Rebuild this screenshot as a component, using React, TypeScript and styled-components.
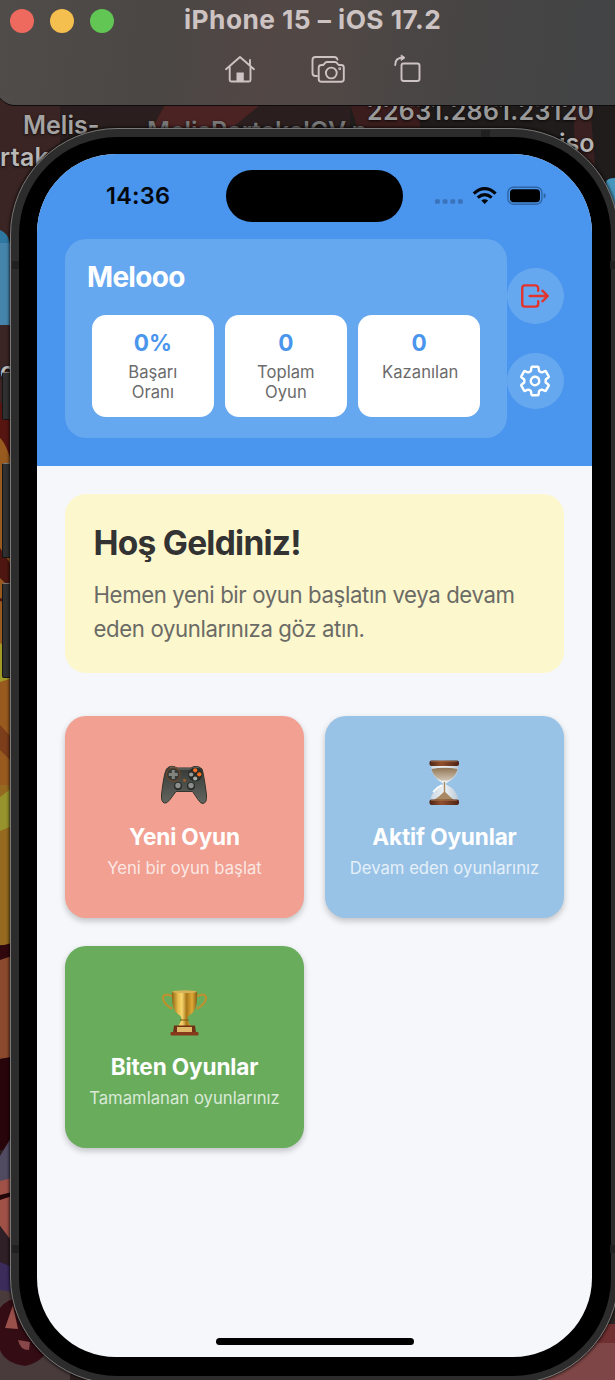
import React from 'react';
import styled, { createGlobalStyle } from 'styled-components';
import { IoLogOutOutline, IoSettingsOutline } from 'react-icons/io5';

const GlobalStyle = createGlobalStyle`
  *, *::before, *::after { box-sizing: border-box; }
  html, body { margin: 0; padding: 0; background: #2a1f1e; }
  body { overflow: hidden; font-family: Inter, "Liberation Sans", sans-serif; }
`;

/* ---------- desktop ---------- */

const Desktop = styled.div`
  position: relative;
  width: 615px;
  height: 1380px;
  overflow: hidden;
`;

const Wallpaper = styled.svg`
  position: absolute;
  inset: 0;
`;

const FileLabel = styled.span<{ $x: number; $y: number; $tone?: string; $track?: number }>`
  position: absolute;
  left: ${p => p.$x}px;
  top: ${p => p.$y}px;
  font-size: 25px;
  line-height: 30px;
  font-weight: 600;
  letter-spacing: ${p => p.$track ?? 0}px;
  white-space: nowrap;
  color: ${p => p.$tone ?? '#a5a3a2'};
  text-shadow: 0 1px 3px rgba(0, 0, 0, 0.8);
`;

/* ---------- simulator window bar ---------- */

const TitleBar = styled.header`
  position: absolute;
  top: 0;
  left: -3px;
  width: 640px;
  height: 106px;
  padding: 8px 0 0 13px;
  border-bottom: 1px solid #0e0c0c;
  border-bottom-left-radius: 18px;
  background: linear-gradient(97deg, #4f4c4a 0%, #4a4745 25%, #524745 42%, #504845 52%, #484544 68%, #434445 92%);
`;

const TitleRow = styled.div`
  display: flex;
  align-items: center;
  height: 26px;
`;

const Light = styled.i<{ $color: string }>`
  width: 24px;
  height: 24px;
  margin-right: 16px;
  border-radius: 50%;
  background: ${p => p.$color};
`;

const WindowTitle = styled.h1`
  margin: -3px 0 0 54px;
  font-size: 26.3px;
  line-height: 30px;
  font-weight: 700;
  letter-spacing: 0.45px;
  white-space: nowrap;
  color: #cdc3c2;
`;

const Tools = styled.div`
  display: flex;
  gap: 52px;
  margin: 17px 0 0 212px;
`;

const ToolIcon = styled.svg`
  display: block;
  width: 36px;
  height: 36px;
  fill: none;
  stroke: #cdc3c2;
  stroke-width: 1.9;
  stroke-linecap: round;
  stroke-linejoin: round;

  &:last-child {
    margin-left: -8px;
  }
`;

/* ---------- phone ---------- */

const Phone = styled.div`
  position: absolute;
  left: 10px;
  top: 128px;
  width: 609px;
  height: 1256px;
  padding: 7.5px;
  border: 1px solid #7b7a79;
  border-radius: 107px;
  background: #2c2c2c;
  box-shadow: 0 0 3px 1px rgba(0, 0, 0, 0.7);
`;

const SideButton = styled.i<{ $top: number; $height: number }>`
  position: absolute;
  left: 2px;
  top: ${p => p.$top}px;
  width: 10px;
  height: ${p => p.$height}px;
  border: 1px solid #151515;
  border-top-color: #777;
  border-radius: 2px 0 0 2px;
  background: #303030;
`;

const Antenna = styled.i<{ $x: number; $y: number; $w: number; $h: number }>`
  position: absolute;
  left: ${p => p.$x}px;
  top: ${p => p.$y}px;
  width: ${p => p.$w}px;
  height: ${p => p.$h}px;
  background: #202020;
`;

const Bezel = styled.div`
  height: 100%;
  padding: 17.5px 18.5px;
  border-radius: 98px;
  background: #000;
`;

const Screen = styled.div`
  display: flex;
  flex-direction: column;
  width: 555px;
  height: 1203px;
  overflow: hidden;
  border-radius: 79px;
  background: #f5f7fb;
`;

const TopArea = styled.section`
  height: 312px;
  padding: 0 28px;
  background: #4a95ed;
`;

const StatusBar = styled.div`
  display: flex;
  align-items: center;
  height: 85px;
  padding: 0 0 1px 41px;
`;

const Clock = styled.time`
  width: 120px;
  margin-top: -2px;
  font-size: 23.5px;
  font-weight: 600;
  letter-spacing: 0.25px;
  color: #04080d;
`;

const Island = styled.div`
  width: 177px;
  height: 52px;
  border-radius: 26px;
  background: #000;
`;

const StatusIcons = styled.svg`
  margin-left: 31px;
  width: 114px;
  height: 26px;
  flex: none;
`;

const HeaderRow = styled.div`
  display: flex;
  align-items: center;
`;

const ProfilePanel = styled.div`
  width: 442px;
  height: 199px;
  padding: 21px 21.5px;
  border-radius: 21px;
  background: #66a8ef;
`;

const UserName = styled.h2`
  margin: 0 0 21px 0.5px;
  font-size: 28px;
  line-height: 35px;
  height: 34px;
  font-weight: 700;
  letter-spacing: -0.7px;
  color: #fff;
`;

const Stats = styled.div`
  display: flex;
  gap: 11.3px;
  padding: 0 5.5px;
`;

const Stat = styled.div`
  width: 122px;
  height: 102px;
  padding: 14px 14px 0;
  border-radius: 14px;
  background: #fff;
  text-align: center;
`;

const StatValue = styled.div`
  font-size: 22.6px;
  line-height: 28px;
  font-weight: 700;
  color: #4a95ed;
`;

const StatLabel = styled.div`
  margin: 5px -10px 0;
  padding: 0 20px;
  font-size: 16.6px;
  line-height: 20.4px;
  letter-spacing: 0.05px;
  color: #6b6b6b;
`;

const Actions = styled.div`
  display: flex;
  flex-direction: column;
  gap: 28.5px;
`;

const RoundButton = styled.button<{ $color: string }>`
  display: grid;
  place-items: center;
  width: 56.5px;
  height: 56.5px;
  padding: 0;
  border: 0;
  border-radius: 50%;
  background: #66a8ef;
  color: ${p => p.$color};
  font-size: 34px;

  svg * {
    stroke-width: 36px;
  }
`;

const Content = styled.main`
  flex: 1;
  padding: 28px;
`;

const Welcome = styled.section`
  height: 179px;
  padding: 28px;
  border-radius: 21px;
  background: #fdf7cd;
`;

const WelcomeTitle = styled.h2`
  margin: 0 0 14px 0.5px;
  font-size: 33.5px;
  line-height: 42px;
  font-weight: 700;
  letter-spacing: -0.75px;
  color: #333;
`;

const WelcomeText = styled.p`
  margin: 0 0 0 0.5px;
  font-size: 22.2px;
  line-height: 34px;
  letter-spacing: -0.38px;
  white-space: nowrap;
  color: #6b6b66;
`;

const Cards = styled.div`
  display: grid;
  grid-template-columns: 239px 239px;
  justify-content: space-between;
  row-gap: 28.5px;
  margin-top: 42.5px;
`;

const Card = styled.button<{ $color: string }>`
  display: flex;
  flex-direction: column;
  align-items: center;
  height: 202px;
  padding: 41px 0 0;
  border: 0;
  border-radius: 21px;
  background: ${p => p.$color};
  box-shadow: 0 3px 6px rgba(0, 0, 0, 0.22);
  font-family: inherit;
  color: #fff;
`;

const Picture = styled.svg`
  width: 54px;
  height: 54px;
  margin-left: -2px;
`;

const CardTitle = styled.strong`
  margin-top: 12px;
  font-size: 22.6px;
  line-height: 28px;
  font-weight: 700;
  letter-spacing: -0.15px;
  white-space: nowrap;
`;

const CardNote = styled.span`
  margin-top: 7px;
  font-size: 16.7px;
  line-height: 20px;
  white-space: nowrap;
  opacity: 0.75;
`;

const HomeIndicator = styled.div`
  width: 198px;
  height: 7px;
  margin: 0 auto 12px;
  border-radius: 4px;
  background: #000;
`;

/* ---------- drawings ---------- */

const Scene = () => (
  <Wallpaper width="615" height="1380" viewBox="0 0 615 1380">
    <rect width="615" height="1380" fill="#2a1f1e" />
    <rect width="60" height="400" y="100" fill="#3a2524" />
    <rect x="350" width="265" height="400" fill="#211c1c" />
    <path d="M165 105H260L205 150H140Z" fill="#4b2322" />
    <path d="M350 105H420V150H365Z" fill="#3b1d1d" />
    <path d="M573 105H590L598 200H578Z" fill="#3a2020" />
    <path d="M0 230Q8 233 10 243V317H0Z" fill="#2e77a0" />
    <rect y="243" width="14" height="82" fill="#4585ac" />
    <path d="M606 182Q607 178 615 178V210H610Z" fill="#4796bd" />
    <rect y="425" width="14" height="365" fill="#985a1e" />
    <path d="M0 402L12 412V464Q6 443 0 438Z" fill="#571512" />
    <path d="M0 548L12 566V590L0 578Z" fill="#4d1611" />
    <path d="M0 598L12 602V605L0 601Z" fill="#4d1611" />
    <path d="M0 643L12 652V678L0 682Z" fill="#a29a27" />
    <path d="M0 725L12 738V762L0 750Z" fill="#7b3d1a" />
    <rect y="785" width="14" height="160" fill="#95691f" />
    <path d="M0 797L12 788V826L0 831Z" fill="#97942d" />
    <path d="M0 946L12 943V956L0 960Z" fill="#30070c" />
    <path d="M0 960L12 956V1057L0 1059Z" fill="#8c4a2c" />
    <path d="M0 1059L12 1057V1150H0Z" fill="#28040b" />
    <path d="M0 1156L12 1136V1190H0Z" fill="#504b61" />
    <path d="M0 1181L12 1178V1242L0 1226Z" fill="#9f5148" />
    <path d="M0 1195L12 1192V1196L0 1200Z" fill="#22070b" />
    <path d="M0 1226L12 1242V1270L0 1262Z" fill="#2e2026" />
    <path d="M0 1262L12 1267V1300H0Z" fill="#3b2c5c" />
    <path d="M0 1290L70 1300V1380H0Z" fill="#493a3b" />
    <path d="M0 1308Q8 1298 20 1298L50 1345Q44 1362 25 1366Q5 1363 0 1350Z" fill="#340c13" />
    <path d="M5 1328L13 1305L18 1329Z" fill="#9a504b" />
    <path d="M18 1340L30 1342L29 1350Q20 1350 18 1340Z" fill="#88484a" />
    <rect x="540" y="1290" width="75" height="90" fill="#7e4646" />
    <rect x="596" y="1290" width="19" height="34" fill="#2a2523" />
    <rect x="596" y="1324" width="19" height="19" fill="#702f30" />
  </Wallpaper>
);

const HouseIcon = () => (
  <ToolIcon viewBox="0 0 36 36">
    <path d="M4 18.2 18 6l14 12.2M7.700 16v13Q7.700 30.500 9.200 30.500H27Q28.500 30.500 28.500 29V16M28 14V9" />
    <path d="M14.500 31V21.500H21.800V31Z" fill="#cdc3c2" stroke="none" />
  </ToolIcon>
);

const CameraIcon = () => (
  <ToolIcon viewBox="0 0 36 36">
    <path d="M7 25H5.500Q2.500 25 2.500 22V9Q2.500 6 5.500 6H24.500Q26.500 6 27.500 8.500" />
    <path d="M12 14H13.200L15.200 11.800Q16 11 17 11H25Q26 11 26.800 11.800L28.600 14H31Q33.800 14 33.800 16.500V28Q33.800 30.800 31 30.800H11.500Q8.700 30.800 8.700 28V16.500Q8.700 14 12 14Z" />
    <circle cx="21.300" cy="22" r="5.400" />
    <circle cx="29.700" cy="17.700" r="0.500" />
  </ToolIcon>
);

const RotateIcon = () => (
  <ToolIcon viewBox="0 0 36 36">
    <rect x="11.500" y="12.500" width="18" height="17.500" rx="2.200" />
    <path d="M5.200 14Q5 6.800 13 6.500" />
    <path d="M11.500 4.200 15 6.700 11.500 9.200Z" fill="#cdc3c2" strokeWidth="1" />
  </ToolIcon>
);

const Indicators = () => (
  <StatusIcons viewBox="0 0 114 26">
    <g fill="#3973b9">
      {[1, 8.7, 16.4, 24].map(x => (
        <rect key={x} x={x} y="16.200" width="4.800" height="4.600" rx="1.400" />
      ))}
    </g>
    <g fill="none" stroke="#03070c" strokeWidth="3.200">
      <path d="M39.800 10.600Q50.700 .8 61.600 10.600" />
      <path d="M43.700 14.600Q50.700 8.600 57.700 14.600" />
    </g>
    <path d="M47.300 17.500Q50.700 15 54.100 17.500L50.700 21.100Z" fill="#03070c" />
    <rect x="73.900" y="4.200" width="34" height="17" rx="5.400" fill="none" stroke="#2f65a3" strokeWidth="1.400" />
    <rect x="76" y="6.200" width="30" height="13" rx="3.600" fill="#000" />
    <path d="M109.700 10Q111.800 10.700 111.800 12.800T109.700 15.600Z" fill="#2f65a3" />
  </StatusIcons>
);

const Gamepad = () => (
  <Picture viewBox="0 0 54 54">
    <defs>
      <linearGradient id="pad" x2="0" y2="1">
        <stop stopColor="#343834" />
        <stop offset="1" stopColor="#646760" />
      </linearGradient>
    </defs>
    <path d="M9.500 12Q12 8.700 17 9.500L20 11H34L37 9.500Q42 8.700 45 12Q47 18 49.500 38Q50 46 46 46.500Q44 47 41 42.500L35.500 34.500H19L13 42.500Q9.500 47 7.500 46Q4 45 4.500 38Q6.500 18 9.500 12Z" fill="url(#pad)" stroke="#34352f" strokeWidth="1" />
    <path d="M13 10.500Q17 9 20 12H34Q38 9 42 11" fill="none" stroke="#888b80" strokeWidth=".8" />
    <circle cx="16.300" cy="17.500" r="6.800" fill="#373a36" stroke="#74482c" strokeWidth="1.100" />
    <path d="M14.800 13h3v3h3v3h-3v3h-3v-3h-3v-3h3Z" fill="#81837d" />
    <circle cx="38.200" cy="17.500" r="7" fill="#292c29" />
    <circle cx="38.200" cy="13.300" r="2.100" fill="#f56d20" />
    <circle cx="42.300" cy="17.300" r="2.100" fill="#f56d20" />
    <circle cx="34.200" cy="17.500" r="2.100" fill="#999b96" />
    <circle cx="38.200" cy="21.500" r="2.100" fill="#aaaaa4" />
    <circle cx="27.500" cy="23.300" r="1.500" fill="#a55c26" />
    <circle cx="21" cy="29" r="4" fill="#272a28" />
    <circle cx="21" cy="28.500" r="2.700" fill="#8c8f8b" />
    <circle cx="34" cy="29" r="4" fill="#272a28" />
    <circle cx="34" cy="28.500" r="2.700" fill="#8c8f8b" />
  </Picture>
);

const Hourglass = () => (
  <Picture viewBox="0 0 54 54">
    <defs>
      <linearGradient id="wood">
        <stop stopColor="#4b2415" />
        <stop offset=".4" stopColor="#92502d" />
        <stop offset="1" stopColor="#4c2114" />
      </linearGradient>
      <linearGradient id="glass">
        <stop stopColor="#c9d7e3" />
        <stop offset=".5" stopColor="#eef2f4" />
        <stop offset="1" stopColor="#b9c8d5" />
      </linearGradient>
      <linearGradient id="sand" x2="0" y2="1">
        <stop stopColor="#907554" />
        <stop offset="1" stopColor="#d1c6b5" />
      </linearGradient>
    </defs>
    <path d="M14 7H41Q42 17 35 22.500L29 26.500V27.500Q41 33 41.500 44H13.500Q14 33 26 27.500V26.500Q14 20 14 7Z" fill="url(#glass)" />
    <path d="M14.500 12Q27.500 9.500 40.500 12Q39 19 33 22.500Q27.500 25 22 22.500Q16 19 14.500 12Z" fill="url(#sand)" />
    <path d="M26.800 25H28.200V35Q32 39 37 43H17Q23 39 26.800 35Z" fill="#a78a63" />
    <path d="M16 35Q20 30 25 28" fill="none" stroke="#fff" strokeWidth="1.400" />
    <rect x="12.500" y="3.500" width="29.500" height="5.500" rx="2" fill="url(#wood)" />
    <rect x="12.500" y="42.500" width="29.500" height="5.500" rx="2" fill="url(#wood)" />
    <path d="M14 4.600H40M14 43.500H40" stroke="#a16a46" strokeWidth=".7" />
  </Picture>
);

const Trophy = () => (
  <Picture viewBox="0 0 54 54">
    <defs>
      <linearGradient id="gold">
        <stop stopColor="#8c6514" />
        <stop offset=".25" stopColor="#e8bd4c" />
        <stop offset=".4" stopColor="#f7d66f" />
        <stop offset=".58" stopColor="#a97719" />
        <stop offset=".8" stopColor="#e0aa37" />
        <stop offset="1" stopColor="#835c11" />
      </linearGradient>
    </defs>
    <g fill="none" stroke="#be9130" strokeWidth="2.200">
      <path d="M16 9.500Q7 5.500 6 10.500Q6 15 11 19Q16 23 14 20" />
      <path d="M39 9.500Q48 5.500 49 10.500Q49 15 44 19Q39 23 41 20" />
    </g>
    <path d="M15 4.500H40Q41 23 33.500 27.500Q30 29.500 30.500 33L34 39.500H21L24.500 33Q25 29.500 21.500 27.500Q14 23 15 4.500Z" fill="url(#gold)" />
    <ellipse cx="27.500" cy="4.700" rx="12.500" ry="1.400" fill="#d7b256" />
    <path d="M23 33H32" stroke="#7c5710" />
    <path d="M17 38.500H38L39 46H16Z" fill="#713116" />
    <rect x="13.500" y="45" width="28" height="3.500" rx="1" fill="#873a1b" />
    <rect x="20" y="40" width="15" height="5" fill="#dfb968" />
  </Picture>
);

const stats = [
  { value: '0%', label: 'Başarı Oranı' },
  { value: '0', label: 'Toplam Oyun' },
  { value: '0', label: 'Kazanılan' },
];

const cards = [
  { title: 'Yeni Oyun', note: 'Yeni bir oyun başlat', color: '#f1a091', Art: Gamepad },
  { title: 'Aktif Oyunlar', note: 'Devam eden oyunlarınız', color: '#98c3e7', Art: Hourglass },
  { title: 'Biten Oyunlar', note: 'Tamamlanan oyunlarınız', color: '#68ac5c', Art: Trophy },
];

export default function App() {
  return (
    <Desktop>
      <GlobalStyle />
      <Scene />
      <FileLabel $x={23} $y={110}>Melis-</FileLabel>
      <FileLabel $x={0} $y={142} $tone="#bab8b7" $track={0.3}>rtakalCV</FileLabel>
      <FileLabel $x={147} $y={116} $tone="#777" $track={-0.15}>MelisPortakalCV.p</FileLabel>
      <FileLabel $x={367} $y={96} $tone="#999" $track={0.35}>22631.2861.23120</FileLabel>
      <FileLabel $x={559} $y={128} $tone="#b5b5b5">iso</FileLabel>
      <FileLabel $x={0} $y={356} $tone="#bbb">c</FileLabel>

      <SideButton $top={372} $height={48} />
      <SideButton $top={463} $height={95} />
      <SideButton $top={583} $height={95} />
      <Phone>
        <Antenna $x={1} $y={132} $w={7} $h={8} />
        <Antenna $x={1} $y={1116} $w={7} $h={8} />
        <Antenna $x={470} $y={1} $w={9} $h={7} />
        <Antenna $x={599} $y={132} $w={7} $h={8} />
        <Antenna $x={599} $y={1116} $w={7} $h={8} />
        <Bezel>
          <Screen>
            <TopArea>
              <StatusBar>
                <Clock>14:36</Clock>
                <Island />
                <Indicators />
              </StatusBar>
              <HeaderRow>
                <ProfilePanel>
                  <UserName>Melooo</UserName>
                  <Stats>
                    {stats.map(s => (
                      <Stat key={s.label}>
                        <StatValue>{s.value}</StatValue>
                        <StatLabel>{s.label}</StatLabel>
                      </Stat>
                    ))}
                  </Stats>
                </ProfilePanel>
                <Actions>
                  <RoundButton $color="#e2332d" aria-label="Çıkış"><IoLogOutOutline /></RoundButton>
                  <RoundButton $color="#fff" aria-label="Ayarlar"><IoSettingsOutline /></RoundButton>
                </Actions>
              </HeaderRow>
            </TopArea>
            <Content>
              <Welcome>
                <WelcomeTitle>Hoş Geldiniz!</WelcomeTitle>
                <WelcomeText>
                  Hemen yeni bir oyun başlatın veya devam<br />
                  eden oyunlarınıza göz atın.
                </WelcomeText>
              </Welcome>
              <Cards>
                {cards.map(({ title, note, color, Art }) => (
                  <Card key={title} $color={color}>
                    <Art />
                    <CardTitle>{title}</CardTitle>
                    <CardNote>{note}</CardNote>
                  </Card>
                ))}
              </Cards>
            </Content>
            <HomeIndicator />
          </Screen>
        </Bezel>
      </Phone>

      <TitleBar>
        <TitleRow>
          <Light $color="#ee6a5f" />
          <Light $color="#f5bf4f" />
          <Light $color="#62c655" />
          <WindowTitle>iPhone 15 – iOS 17.2</WindowTitle>
        </TitleRow>
        <Tools>
          <HouseIcon />
          <CameraIcon />
          <RotateIcon />
        </Tools>
      </TitleBar>
    </Desktop>
  );
}
